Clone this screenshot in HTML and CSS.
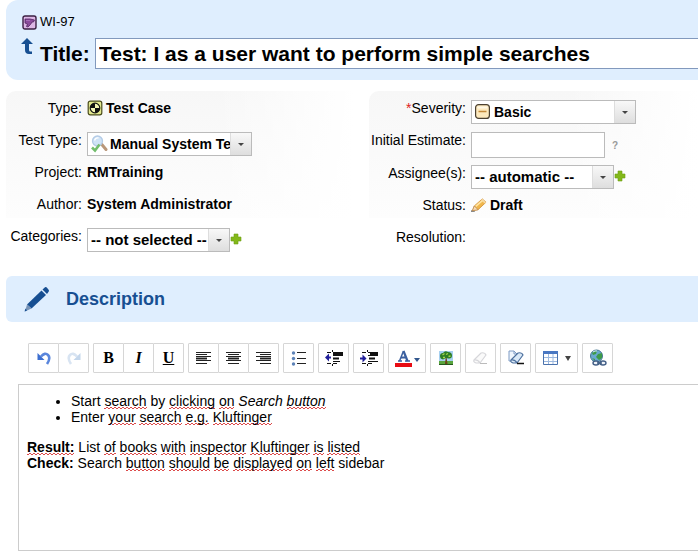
FILE: index.html
```html
<!DOCTYPE html>
<html lang="en">
<head>
<meta charset="utf-8">
<meta name="viewport" content="width=device-width, initial-scale=1">
<title>WI-97</title>
<link rel="stylesheet" href="styles.css">
</head>
<body>
<main class="page">
  <header class="header">
    <div class="item-id">
      <svg class="icon" width="15" height="15" viewBox="0 0 15 15" aria-hidden="true">
        <rect x="1" y="1" width="13" height="13" rx="2" fill="#dcb6e4" stroke="#3a1f42" stroke-width="1.4"/>
        <path d="M3 4h5l4.500 1-1 2H10L8.500 9.500 6 12 4.500 11.500 5.500 9 3 8z" fill="#8b4b9b" stroke="#522561" stroke-width=".8"/>
        <path d="M4 5.500h4" stroke="#b57cc4" stroke-width=".7"/>
      </svg>
      <span>WI-97</span>
    </div>
    <div class="title-row">
      <svg class="title-arrow" width="13" height="17" viewBox="0 0 13 17" aria-hidden="true">
        <path d="M6 0L12 6H8v6q0 1.500 1.500 1.500H11V16H8Q4 16 4 12V6H0z" fill="#174f92"/>
      </svg>
      <label for="title">Title:</label>
      <input class="title-input" id="title" type="text" value="Test: I as a user want to perform simple searches">
    </div>
  </header>

  <section class="panels">
    <div class="panel panel-left">
      <div class="row">
        <span class="label">Type:</span>
        <span class="value">
          <svg class="icon" width="16" height="16" viewBox="0 0 16 16" aria-hidden="true">
            <rect x="1.200" y="1.200" width="13.600" height="13.600" rx="2" fill="#e3e98f" stroke="#4a4c1a" stroke-width="1.200"/>
            <circle cx="8" cy="8" r="4.800" fill="#f4f6b4" stroke="#111" stroke-width="1.200"/>
            <path d="M8 8V3.200A4.800 4.800 0 0 0 3.200 8zM8 8v4.800A4.800 4.800 0 0 0 12.800 8z" fill="#111"/>
          </svg>
          Test Case
        </span>
      </div>
      <div class="row">
        <label class="label" for="test-type">Test Type:</label>
        <span class="select with-icon test-type">
          <select id="test-type"><option>Manual System Test</option></select>
          <svg class="select-icon" width="18" height="18" viewBox="0 0 18 18" aria-hidden="true">
            <path d="M11 8.500l5 6" stroke="#b9977a" stroke-width="3" stroke-linecap="round"/>
            <circle cx="7.500" cy="6" r="5" fill="#cfe3f6" stroke="#b3cbe6" stroke-width="1.300"/>
            <path d="M4.500 5.500q1-3 4-2.500" stroke="#fff" stroke-width="1.300" fill="none"/>
            <path d="M2 12.500l3 3 4.500-6" stroke="#72bd6c" stroke-width="2.600" fill="none"/>
          </svg>
        </span>
      </div>
      <div class="row">
        <span class="label">Project:</span>
        <span class="value">RMTraining</span>
      </div>
      <div class="row">
        <span class="label">Author:</span>
        <span class="value">System Administrator</span>
      </div>
      <div class="row">
        <label class="label" for="categories">Categories:</label>
        <span class="select placeholder">
          <select id="categories"><option>-- not selected --</option></select>
        </span>
        <button class="add" type="button" aria-label="Add category">
          <svg width="12" height="12" viewBox="0 0 12 12"><path d="M4 1h4v3h3v4H8v3H4V8H1V4h3z" fill="#83b81a" stroke="#6da010" stroke-width=".6"/></svg>
        </button>
      </div>
    </div>

    <div class="panel panel-right">
      <div class="row">
        <label class="label" for="severity"><span class="required">*</span>Severity:</label>
        <span class="select with-icon severity">
          <select id="severity"><option>Basic</option></select>
          <svg class="select-icon" width="18" height="18" viewBox="0 0 18 18" aria-hidden="true">
            <rect x="1.600" y="1.600" width="13.800" height="13.800" rx="3" fill="#fde9bd" stroke="#4b4030" stroke-width="1.200"/>
            <path d="M3.500 4.500h10" stroke="#fff8e6" stroke-width="2"/>
            <path d="M4.500 8.500h8" stroke="#c48a3a" stroke-width="1.500"/>
          </svg>
        </span>
      </div>
      <div class="row tall">
        <label class="label" for="estimate">Initial Estimate:</label>
        <input class="estimate" id="estimate" type="text">
        <span class="help">?</span>
      </div>
      <div class="row">
        <label class="label" for="assignee">Assignee(s):</label>
        <span class="select placeholder">
          <select id="assignee"><option>-- automatic --</option></select>
        </span>
        <button class="add" type="button" aria-label="Add assignee">
          <svg width="12" height="12" viewBox="0 0 12 12"><path d="M4 1h4v3h3v4H8v3H4V8H1V4h3z" fill="#83b81a" stroke="#6da010" stroke-width=".6"/></svg>
        </button>
      </div>
      <div class="row">
        <span class="label">Status:</span>
        <span class="value">
          <svg class="icon" width="16" height="16" viewBox="0 0 17 16" aria-hidden="true">
            <path d="M0 14.500h4" stroke="#777" stroke-width="1.600"/>
            <path d="M1.500 14l2-5L12 1.500l4 3.500-8.500 8z" fill="#f0b64c" stroke="#cf8a2e" stroke-width=".8"/>
            <path d="M5 9.500l8-7" stroke="#ffe5a3" stroke-width="1.600"/>
            <path d="M1.500 14l2-5 4 4z" fill="#f7dcb8" stroke="#a9783f" stroke-width=".6"/>
            <path d="M12 1.500l4 3.500-1.500 1.300-4-3.500z" fill="#f6d9a2"/>
          </svg>
          Draft
        </span>
      </div>
      <div class="row">
        <span class="label">Resolution:</span>
      </div>
    </div>
  </section>

  <div class="section-bar">
    <svg width="26" height="26" viewBox="0 0 26 26" aria-hidden="true">
      <path d="M3 18.500L17.500 4.500l4.500 4.500L7.500 22.500z" fill="#174f92"/>
      <path d="M18.500 3.500L21 1.300q1-.6 1.800.2L24.800 4q.5 1-.2 1.700L23 8z" fill="#174f92"/>
      <path d="M3 18.500l4.500 4-6.500 3z" fill="#7893b6"/>
      <path d="M1.500 22.500l1.500 2-2.500 1z" fill="#174f92"/>
    </svg>
    <h2>Description</h2>
  </div>

  <div class="toolbar" role="toolbar" aria-label="Formatting">
    <div class="group">
      <button class="tool" type="button" aria-label="Undo"><svg width="16" height="16" viewBox="0 0 16 16"><path d="M5 6.500Q9 2 12 5t-1 9" fill="none" stroke="#5a86dc" stroke-width="2.600"/><path d="M1.500 3v7h7z" fill="#3d6fd0"/></svg></button>
      <button class="tool" type="button" aria-label="Redo" disabled><svg width="16" height="16" viewBox="0 0 16 16"><path d="M11 6.500Q7 2 4 5t1 9" fill="none" stroke="#d8e4f2" stroke-width="2.600"/><path d="M14.500 3v7h-7z" fill="#c4d7ec"/></svg></button>
    </div>
    <div class="group">
      <button class="tool letter" type="button" aria-label="Bold"><b>B</b></button>
      <button class="tool letter" type="button" aria-label="Italic"><i>I</i></button>
      <button class="tool letter" type="button" aria-label="Underline"><u>U</u></button>
    </div>
    <div class="group">
      <button class="tool" type="button" aria-label="Align left"><svg width="16" height="16" viewBox="0 0 16 16"><path d="M0 2.500h15M0 6.500h15M0 10.500h15" stroke="#222"/><path d="M0 4.500h11M0 8.500h11M0 13.500h11" stroke="#222"/><path d="M0 7.500h11M0 9.500h11" stroke="#999"/></svg></button>
      <button class="tool" type="button" aria-label="Align center"><svg width="16" height="16" viewBox="0 0 16 16"><path d="M0 2.500h15M0 6.500h15M0 10.500h15" stroke="#222"/><path d="M2 4.500h11M2 8.500h11M2 13.500h11" stroke="#222"/><path d="M2 7.500h11M2 9.500h11" stroke="#999"/></svg></button>
      <button class="tool" type="button" aria-label="Align right"><svg width="16" height="16" viewBox="0 0 16 16"><path d="M0 2.500h15M0 6.500h15M0 10.500h15" stroke="#222"/><path d="M4 4.500h11M4 8.500h11M4 13.500h11" stroke="#222"/><path d="M4 7.500h11M4 9.500h11" stroke="#999"/></svg></button>
    </div>
    <button class="tool" type="button" aria-label="Bulleted list"><svg width="16" height="16" viewBox="0 0 16 16"><g fill="#5d83b8"><circle cx="2.500" cy="3" r="1.700"/><circle cx="2.500" cy="8.500" r="1.700"/><circle cx="2.500" cy="14" r="1.700"/></g><path d="M6 2.500h9M6 8.500h9M6 13.500h9" stroke="#222"/></svg></button>
    <button class="tool" type="button" aria-label="Decrease indent"><svg width="18" height="18" viewBox="0 0 18 18"><path d="M2 3.500h4M8 3.500h10M8 6.500h10M8 12.500h7M2 14.500h4M8 14.500h4" stroke="#111"/><path d="M8 5h10M8 9.500h6" stroke="#111" stroke-width="2"/><path d="M7.500 1v2M7.500 15v2" stroke="#111"/><path d="M0 8.500l4-4v3h2v2H4v3z" fill="#22209a"/></svg></button>
    <button class="tool" type="button" aria-label="Increase indent"><svg width="18" height="18" viewBox="0 0 18 18"><path d="M2 3.500h4M8 3.500h10M8 6.500h10M8 12.500h10M2 14.500h4M8 14.500h4" stroke="#111"/><path d="M10 5h8M9 9.500h6" stroke="#111" stroke-width="2"/><path d="M7.500 1v2M7.500 15v2" stroke="#111"/><path d="M6.500 9.500l-4-4v3H0v2h2.500v3z" fill="#22209a"/></svg></button>
    <button class="tool color" type="button" aria-label="Text color"><svg width="25" height="18" viewBox="0 0 25 18"><path d="M3 12h4M10 12h5" stroke="#3a5f9f" stroke-width="1.500"/><path d="M4.500 12L8.500 2" stroke="#3a5f9f" stroke-width="1.500"/><path d="M8.500 2l4 10M6 8.500h5" fill="none" stroke="#3a5f9f" stroke-width="2.200"/><path d="M0 14h17v4H0z" fill="#e80c14"/><path d="M19 9h6l-3 4z" fill="#31568c"/></svg></button>
    <button class="tool" type="button" aria-label="Image"><svg width="16" height="16" viewBox="0 0 16 16"><path d="M1 1h14v10H1z" fill="#a6d0f0"/><path d="M1 11h14v4H1z" fill="#5aa53e"/><path d="M1 14h14v1H1z" fill="#24591d"/><path d="M8.500 7l1 7H7l.8-7z" fill="#6b4218"/><path d="M2 6Q2 3 5 3q2-3 5-1 4 0 4 3.500 0 3.500-3.500 3L8 8 5 9.500Q2 9 2 6z" fill="#2d7d25"/><path d="M4.500 5l2-1.500M8 4.500l2-1M10.500 6.500l2-.5M5 7.500h2" stroke="#a7d84a" stroke-width="1.300"/></svg></button>
    <button class="tool" type="button" aria-label="Remove format" disabled><svg width="17" height="16" viewBox="0 0 17 16"><path d="M2 10l7-7q4-1 5 2l-6 8H4q-3-1-2-3zM2 10q4-1 6 3" fill="#fafafa" stroke="#d6d6da" stroke-width="1.200"/><path d="M8 13.500h7" stroke="#bbb"/></svg></button>
    <button class="tool" type="button" aria-label="Clear formatting"><svg width="18" height="18" viewBox="0 0 18 18"><path d="M2 2h5l3 3v7H2z" fill="#eef5fd" stroke="#7f9bc4"/><path d="M7 2v3h3" fill="none" stroke="#7f9bc4"/><path d="M4 11l7-7q4-1 5 2l-6 8H6q-3-1-2-3zM4 11q4-1 6 3" fill="#d9e8f7" stroke="#4c6f9d" stroke-width="1.200"/><path d="M10 14.500h7" stroke="#111" stroke-width="1.500"/></svg></button>
    <button class="tool table" type="button" aria-label="Table"><svg width="28" height="16" viewBox="0 0 28 16"><path d="M.5 1.500h14v13H.5z" fill="#fff" stroke="#4a72ad"/><path d="M0 1h15v3H0z" fill="#4a78c2"/><path d="M1 7.500h13M1 11.500h13M5.500 4v10M10 4v10" stroke="#9db9df"/><path d="M22 6h6l-3 5z" fill="#444"/></svg></button>
    <button class="tool" type="button" aria-label="Link"><svg width="18" height="18" viewBox="0 0 18 18"><circle cx="7.500" cy="7" r="6" fill="#68a9cf" stroke="#44758f"/><path d="M3 4q3-3 5-2l-1 3-3 1zM9 5l4-1v5l-3 2-3-3zM3 9l3 1v2z" fill="#3e9a48"/><path d="M4 3q2-1.500 4-1" stroke="#d6efff" fill="none"/><g fill="#eef2f8" stroke="#435f86" stroke-width="1.400"><ellipse cx="7" cy="14" rx="3" ry="2"/><ellipse cx="14" cy="14" rx="3" ry="2"/></g><path d="M8 14h5" stroke="#435f86" stroke-width="1.600"/></svg></button>
  </div>

  <div class="editor" role="textbox" aria-multiline="true" aria-label="Description" contenteditable="true" spellcheck="false">
    <ul>
      <li>Start <span class="typo">search</span> by <span class="typo">clicking</span> <span class="typo">on</span> <em>Search <span class="typo">button</span></em></li>
      <li>Enter <span class="typo">your</span> <span class="typo">search</span> <span class="typo">e.g.</span> <span class="typo">Kluftinger</span></li>
    </ul>
    <p><b class="typo">Result:</b> List <span class="typo">of</span> <span class="typo">books</span> <span class="typo">with</span> <span class="typo">inspector</span> <span class="typo">Kluftinger</span> <span class="typo">is</span> <span class="typo">listed</span><br>
    <b>Check:</b> Search <span class="typo">button</span> <span class="typo">should</span> <span class="typo">be</span> <span class="typo">displayed</span> <span class="typo">on</span> <span class="typo">left</span> sidebar</p>
  </div>
</main>
</body>
</html>
```

FILE: styles.css
```css
* { box-sizing: border-box; }

body {
  margin: 0;
  background: #fff;
  color: #000;
  font: 14px/16px "Liberation Sans", Arial, sans-serif;
}

button, input, select { font: inherit; color: inherit; }
svg { display: block; flex: none; }

.page { padding-left: 6px; }

/* Header */
.header {
  padding: 12px 0 11px 15px;
  background: #dfeefe;
  border-radius: 12px 0 0 12px;
}

.item-id {
  display: flex;
  align-items: center;
  gap: 3px;
  height: 20px;
  margin-bottom: 6px;
  font-size: 13px;
}
.item-id .icon { margin-left: 1px; }

.title-row {
  display: flex;
  align-items: center;
  font-size: 21px;
  line-height: 24px;
  font-weight: bold;
}
.title-arrow { align-self: flex-start; margin-right: 6px; }
.title-row label { width: 55px; }

.title-input {
  flex: 1;
  min-width: 0;
  height: 31px;
  padding: 0 3px;
  border: 1px solid #8299bd;
  border-right: 0;
  background: #fff;
  font-weight: bold;
}

/* Property panels */
.panels {
  display: grid;
  grid-template-columns: 348fr 329fr;
  gap: 15px;
  padding-top: 11px;
}

.panel {
  padding-top: 9px;
  border-radius: 10px 0 0 0;
  background:
    linear-gradient(to right, transparent 60%, #fff) no-repeat 0 0 / 100% 127px,
    linear-gradient(#f7f7f7, #fdfdfd) no-repeat 0 0 / 100% 127px;
}

.row {
  display: flex;
  align-items: flex-start;
  height: 32px;
}
.row.tall { height: 33px; }

.label {
  flex: none;
  margin-right: 5px;
  text-align: right;
  white-space: nowrap;
}
.panel-left .label { width: 76px; }
.panel-right .label { width: 97px; }
.required { color: #e02020; }

.value {
  display: flex;
  align-items: center;
  gap: 3px;
  height: 16px;
  font-weight: bold;
}

.select {
  position: relative;
  display: inline-flex;
  width: 143px;
  height: 24px;
  border: 1px solid #bbb;
  background: #fff;
}
.select.test-type,
.select.severity { width: 165px; }

.select select {
  width: 100%;
  padding: 0 20px 0 3px;
  border: 0;
  appearance: none;
  background: transparent;
  font-weight: bold;
  outline: 0;
}
.select.with-icon select { padding-left: 22px; }
.select.placeholder select { font-size: 15px; }

.select::before,
.select::after {
  content: "";
  position: absolute;
  pointer-events: none;
}
.select::before {
  top: 0;
  right: 0;
  bottom: 0;
  width: 20px;
  border-left: 1px solid #ddd;
  background: linear-gradient(#f8f8f8, #dedede);
}
.select::after {
  top: 10px;
  right: 7px;
  border: 3px solid transparent;
  border-top-color: #444;
  border-bottom: 0;
}

.select-icon {
  position: absolute;
  top: 2px;
  left: 2px;
  pointer-events: none;
}

.estimate {
  width: 134px;
  height: 26px;
  border: 1px solid #bbb;
  background: #fff;
}

.help {
  margin: 6px 0 0 7px;
  color: #999;
  font-size: 10px;
  font-weight: bold;
}

.add {
  margin: 5px 0 0;
  padding: 0;
  border: 0;
  background: none;
}

/* Description */
.section-bar {
  display: flex;
  align-items: center;
  gap: 16px;
  height: 46px;
  margin-top: 15px;
  padding-left: 18px;
  border-radius: 6px 0 0 6px;
  background: #dfeefe;
}
.section-bar h2 {
  margin: 0;
  color: #174f92;
  font-size: 18px;
  line-height: 20px;
}

.toolbar {
  display: flex;
  gap: 4px;
  padding: 21px 0 0 22px;
}

.group { display: flex; }
.group .tool + .tool { margin-left: -1px; }

.tool {
  display: flex;
  align-items: center;
  justify-content: center;
  flex: none;
  width: 31px;
  height: 30px;
  padding: 0;
  border: 1px solid #d6d6d6;
  border-radius: 1px;
  background: #fff;
}
.tool.color { width: 38px; }
.tool.table { width: 43px; }
.tool.letter {
  font: bold 16px/18px "Liberation Serif", "Times New Roman", serif;
}

.editor {
  min-height: 167px;
  margin: 11px 0 0 12px;
  padding: 8px;
  border: 1px solid #ccc;
  border-right: 0;
  outline: 0;
}
.editor ul {
  margin: 0 0 14px;
  padding-left: 44px;
}
.editor p { margin: 0; }

/* Two staggered dash rows form the spell-check zigzag */
.typo {
  background:
    repeating-linear-gradient(to right, #dc4a4a 0 2px, transparent 2px 4px) no-repeat 0 100% / 100% 1px,
    repeating-linear-gradient(to right, transparent 0 2px, #dc4a4a 2px 4px) no-repeat 0 calc(100% - 1px) / 100% 1px;
}
```
